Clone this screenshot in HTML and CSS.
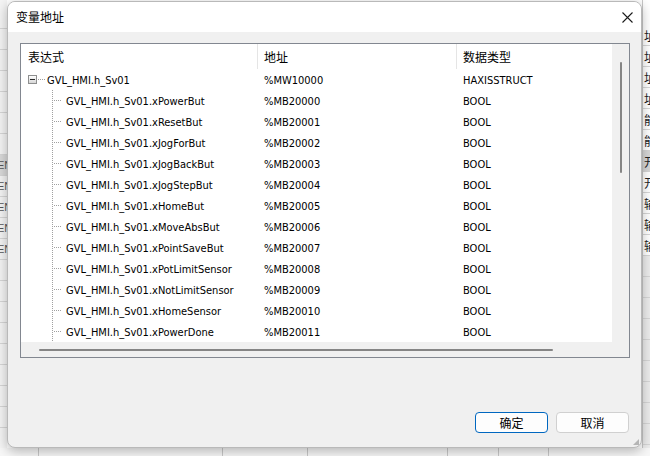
FILE: index.html
```html
<!DOCTYPE html>
<html>
<head>
  <meta charset="utf-8">
  <link rel="stylesheet" href="styles.css">
</head>
<body>
  <div class="sheet">
    <div class="sheet-left">
      <div class="cell"></div><div class="cell"></div><div class="cell"></div><div class="cell"></div>
      <div class="cell"></div><div class="cell"></div><div class="cell"></div>
      <div class="cell sel">EN</div><div class="cell">EN</div><div class="cell">EN</div>
      <div class="cell">EN</div><div class="cell">EN</div><div class="cell"></div><div class="cell"></div>
      <div class="cell"></div><div class="cell"></div><div class="cell"></div><div class="cell"></div>
      <div class="cell"></div><div class="cell"></div><div class="cell"></div><div class="cell"></div>
    </div>
    <div class="sheet-mid"></div>
    <div class="sheet-right">
      <div class="cell">址</div><div class="cell">址</div><div class="cell">址</div><div class="cell">址</div>
      <div class="cell">能</div><div class="cell">能</div><div class="cell sel">开</div><div class="cell">开</div>
      <div class="cell">输</div><div class="cell">输</div><div class="cell">输</div>
      <div class="cell grey"></div><div class="cell grey"></div><div class="cell grey"></div>
      <div class="cell grey"></div><div class="cell grey"></div><div class="cell grey"></div>
      <div class="cell grey"></div><div class="cell grey"></div><div class="cell grey"></div>
      <div class="cell grey"></div>
    </div>
    <div class="sheet-bottom">
      <span class="bold-text">轴控制参数</span>
    </div>
  </div>

  <div class="dialog">
    <div class="titlebar">
      <span class="title">变量地址</span>
      <svg class="close" width="11" height="11" viewBox="0 0 11 11">
        <path d="M0.5 0.5 L10.5 10.5 M10.5 0.5 L0.5 10.5" stroke="#1b1b1b" stroke-width="1.1" fill="none"/>
      </svg>
    </div>

    <div class="content">
      <div class="tree">
        <div class="tree-main">
          <div class="tree-list">
            <div class="head">
              <div class="col c1">表达式</div>
              <div class="col c2">地址</div>
              <div class="col c3">数据类型</div>
            </div>
            <div class="rows" id="rows">
              <div class="row root">
                <div class="col c1"><span class="toggle"></span>GVL_HMI.h_Sv01</div>
                <div class="col c2">%MW10000</div>
                <div class="col c3">HAXISSTRUCT</div>
              </div>
            </div>
          </div>
          <div class="vscroll"><div class="vthumb"></div></div>
        </div>
        <div class="hscroll"><div class="hthumb"></div></div>
      </div>
    </div>

    <div class="footer">
      <button type="button" class="btn primary">确定</button>
      <button type="button" class="btn">取消</button>
    </div>
    <div class="grip"></div>
  </div>

  <script>
    const members = [
      'xPowerBut', 'xResetBut', 'xJogForBut', 'xJogBackBut', 'xJogStepBut',
      'xHomeBut', 'xMoveAbsBut', 'xPointSaveBut', 'xPotLimitSensor',
      'xNotLimitSensor', 'xHomeSensor', 'xPowerDone'
    ];
    const rows = document.getElementById('rows');
    members.forEach((name, i) => {
      const row = document.createElement('div');
      row.className = 'row child';
      row.innerHTML =
        '<div class="col c1">GVL_HMI.h_Sv01.' + name + '</div>' +
        '<div class="col c2">%MB' + (20000 + i) + '</div>' +
        '<div class="col c3">BOOL</div>';
      rows.appendChild(row);
    });
  </script>
</body>
</html>
```

FILE: styles.css
```css
html, body {
  margin: 0;
  padding: 0;
}

body {
  width: 650px;
  height: 456px;
  overflow: hidden;
  position: relative;
  background: #ffffff;
  font-family: "DejaVu Sans Condensed", "DejaVu Sans", "Noto Sans CJK SC", sans-serif;
  font-stretch: condensed;
  font-size: 11px;
  color: #000;
}

/* spreadsheet behind the dialog */
.sheet {
  height: 100%;
  display: grid;
  grid-template-columns: 7px 1fr 8px;
  grid-template-rows: 448px 1fr;
}

.sheet-left, .sheet-right {
  display: flex;
  flex-direction: column;
  overflow: hidden;
}

.sheet-left .cell, .sheet-right .cell {
  height: 20px;
  flex-shrink: 0;
  border-bottom: 1px solid #d6d6d6;
  display: flex;
  align-items: center;
  overflow: hidden;
  font-family: "Noto Sans CJK SC", sans-serif;
  font-size: 12px;
  color: #222;
  white-space: nowrap;
}

.sheet-left {
  padding-top: 8px;
  background: #f4f4f4;
}

.sheet-left .cell {
  font-family: "Liberation Sans", sans-serif;
  font-size: 11px;
  color: #555;
  text-indent: -3px;
}

.sheet-left .cell.sel { background: #d9d9d9; }

.sheet-mid { background: #fff; }

.sheet-right {
  padding-top: 25px;
  border-left: 1px solid #c8c8c8;
}

.sheet-right .cell { padding-left: 1px; }
.sheet-right .cell.sel { background: #d6d6d6; }
.sheet-right .cell.grey { background: #ececec; }

.sheet-bottom {
  grid-column: 1 / 4;
  background:
    linear-gradient(#c8c8c8, #c8c8c8) 38px 0 / 1px 100% no-repeat,
    linear-gradient(#c8c8c8, #c8c8c8) 222px 0 / 1px 100% no-repeat,
    linear-gradient(#c8c8c8, #c8c8c8) 307px 0 / 1px 100% no-repeat,
    linear-gradient(#c8c8c8, #c8c8c8) 447px 0 / 1px 100% no-repeat,
    linear-gradient(#c8c8c8, #c8c8c8) 498px 0 / 1px 100% no-repeat,
    linear-gradient(#c8c8c8, #c8c8c8) 548px 0 / 1px 100% no-repeat,
    #f7f7f7;
  padding-left: 58px;
  padding-top: 5px;
  overflow: hidden;
}

.bold-text {
  font-family: "Noto Sans CJK SC", sans-serif;
  font-weight: bold;
  font-size: 15px;
  letter-spacing: 8px;
  color: #111;
}

/* dialog window */
.dialog {
  position: absolute;
  left: 7px;
  top: 1px;
  width: 633px;
  height: 445px;
  border: 1px solid #b9b9b9;
  border-radius: 8px;
  overflow: hidden;
  background: #f0f0f0;
  box-shadow: 0 3px 12px rgba(0, 0, 0, 0.28);
  display: flex;
  flex-direction: column;
}

.titlebar {
  height: 30px;
  flex-shrink: 0;
  background: #ffffff;
  display: flex;
  align-items: center;
  justify-content: space-between;
  padding: 0 8px 0 8px;
}

.title {
  font-family: "Noto Sans CJK SC", sans-serif;
  font-size: 12px;
  color: #000;
  margin-top: -1px;
}

.content {
  padding: 11px 11px 0 12px;
}

.tree {
  height: 313px;
  border: 1px solid #828790;
  background: #fff;
  display: flex;
  flex-direction: column;
}

.tree-main {
  flex: 1;
  display: flex;
  min-height: 0;
}

.tree-list {
  flex: 1;
  overflow: hidden;
}

.head {
  height: 25px;
  display: flex;
  font-family: "Noto Sans CJK SC", sans-serif;
  font-size: 12px;
}

.head .col {
  display: flex;
  align-items: center;
}

.head .c2, .head .c3 {
  border-left: 1px solid #e5e5e5;
}

.col { white-space: nowrap; }
.c1 { width: 236px; padding-left: 7px; box-sizing: border-box; }
.c2 { width: 199px; padding-left: 6px; box-sizing: border-box; }
.c3 { flex: 1; padding-left: 6px; box-sizing: border-box; }

.rows {
  background: repeating-linear-gradient(to bottom, #a0a0a0 0 1px, transparent 1px 2px) 31px 21px / 1px 100% no-repeat;
}

.row {
  height: 21px;
  display: flex;
  align-items: center;
}

.row .col {
  display: flex;
  align-items: center;
  height: 100%;
  padding-top: 2px;
}

.row .c2, .row .c3 { padding-left: 7px; }

/* expand / collapse box on the root item */
.toggle {
  width: 7px;
  height: 7px;
  border: 1px solid #8e8f8f;
  background: linear-gradient(#ffffff, #d6d6d6);
  position: relative;
  margin-right: 10px;
  margin-top: -2px;
  flex-shrink: 0;
}

.toggle::before {
  content: "";
  position: absolute;
  left: 1px;
  top: 3px;
  width: 5px;
  height: 1px;
  background: #2a2a2a;
}

.toggle::after {
  content: "";
  position: absolute;
  left: 9px;
  top: 3px;
  width: 7px;
  height: 1px;
  background: repeating-linear-gradient(to right, #a0a0a0 0 1px, transparent 1px 2px);
}

.row.child .c1 {
  padding-left: 45px;
  position: relative;
}

.row.child .c1::before {
  content: "";
  position: absolute;
  left: 33px;
  top: 10px;
  width: 8px;
  height: 1px;
  background: repeating-linear-gradient(to right, #a0a0a0 0 1px, transparent 1px 2px);
}

.vscroll {
  width: 17px;
  flex-shrink: 0;
  background: #f0f0f0;
  display: flex;
  justify-content: center;
  padding-top: 18px;
}

.vthumb {
  width: 2px;
  height: 111px;
  background: #858585;
  border-radius: 1px;
}

.hscroll {
  height: 15px;
  flex-shrink: 0;
  background: #f0f0f0;
  display: flex;
  align-items: center;
  padding-left: 18px;
}

.hthumb {
  width: 514px;
  height: 2px;
  background: #858585;
  border-radius: 1px;
}

.footer {
  flex: 1;
  display: flex;
  justify-content: flex-end;
  align-items: flex-start;
  gap: 8px;
  padding: 54px 12px 0 0;
}

.btn {
  width: 73px;
  height: 21px;
  border: 1px solid #d0d0d0;
  border-radius: 4px;
  background: #fdfdfd;
  font-family: "Noto Sans CJK SC", sans-serif;
  font-size: 12px;
  color: #000;
  padding: 0;
  line-height: 19px;
}

.btn.primary {
  border-color: #0067c0;
}

.grip {
  position: absolute;
  right: 2px;
  bottom: 2px;
  width: 6px;
  height: 6px;
  background: radial-gradient(circle, #b5b5b5 0.8px, transparent 1px) 0 0 / 2px 2px;
  clip-path: polygon(100% 0, 100% 100%, 0 100%);
}
```
